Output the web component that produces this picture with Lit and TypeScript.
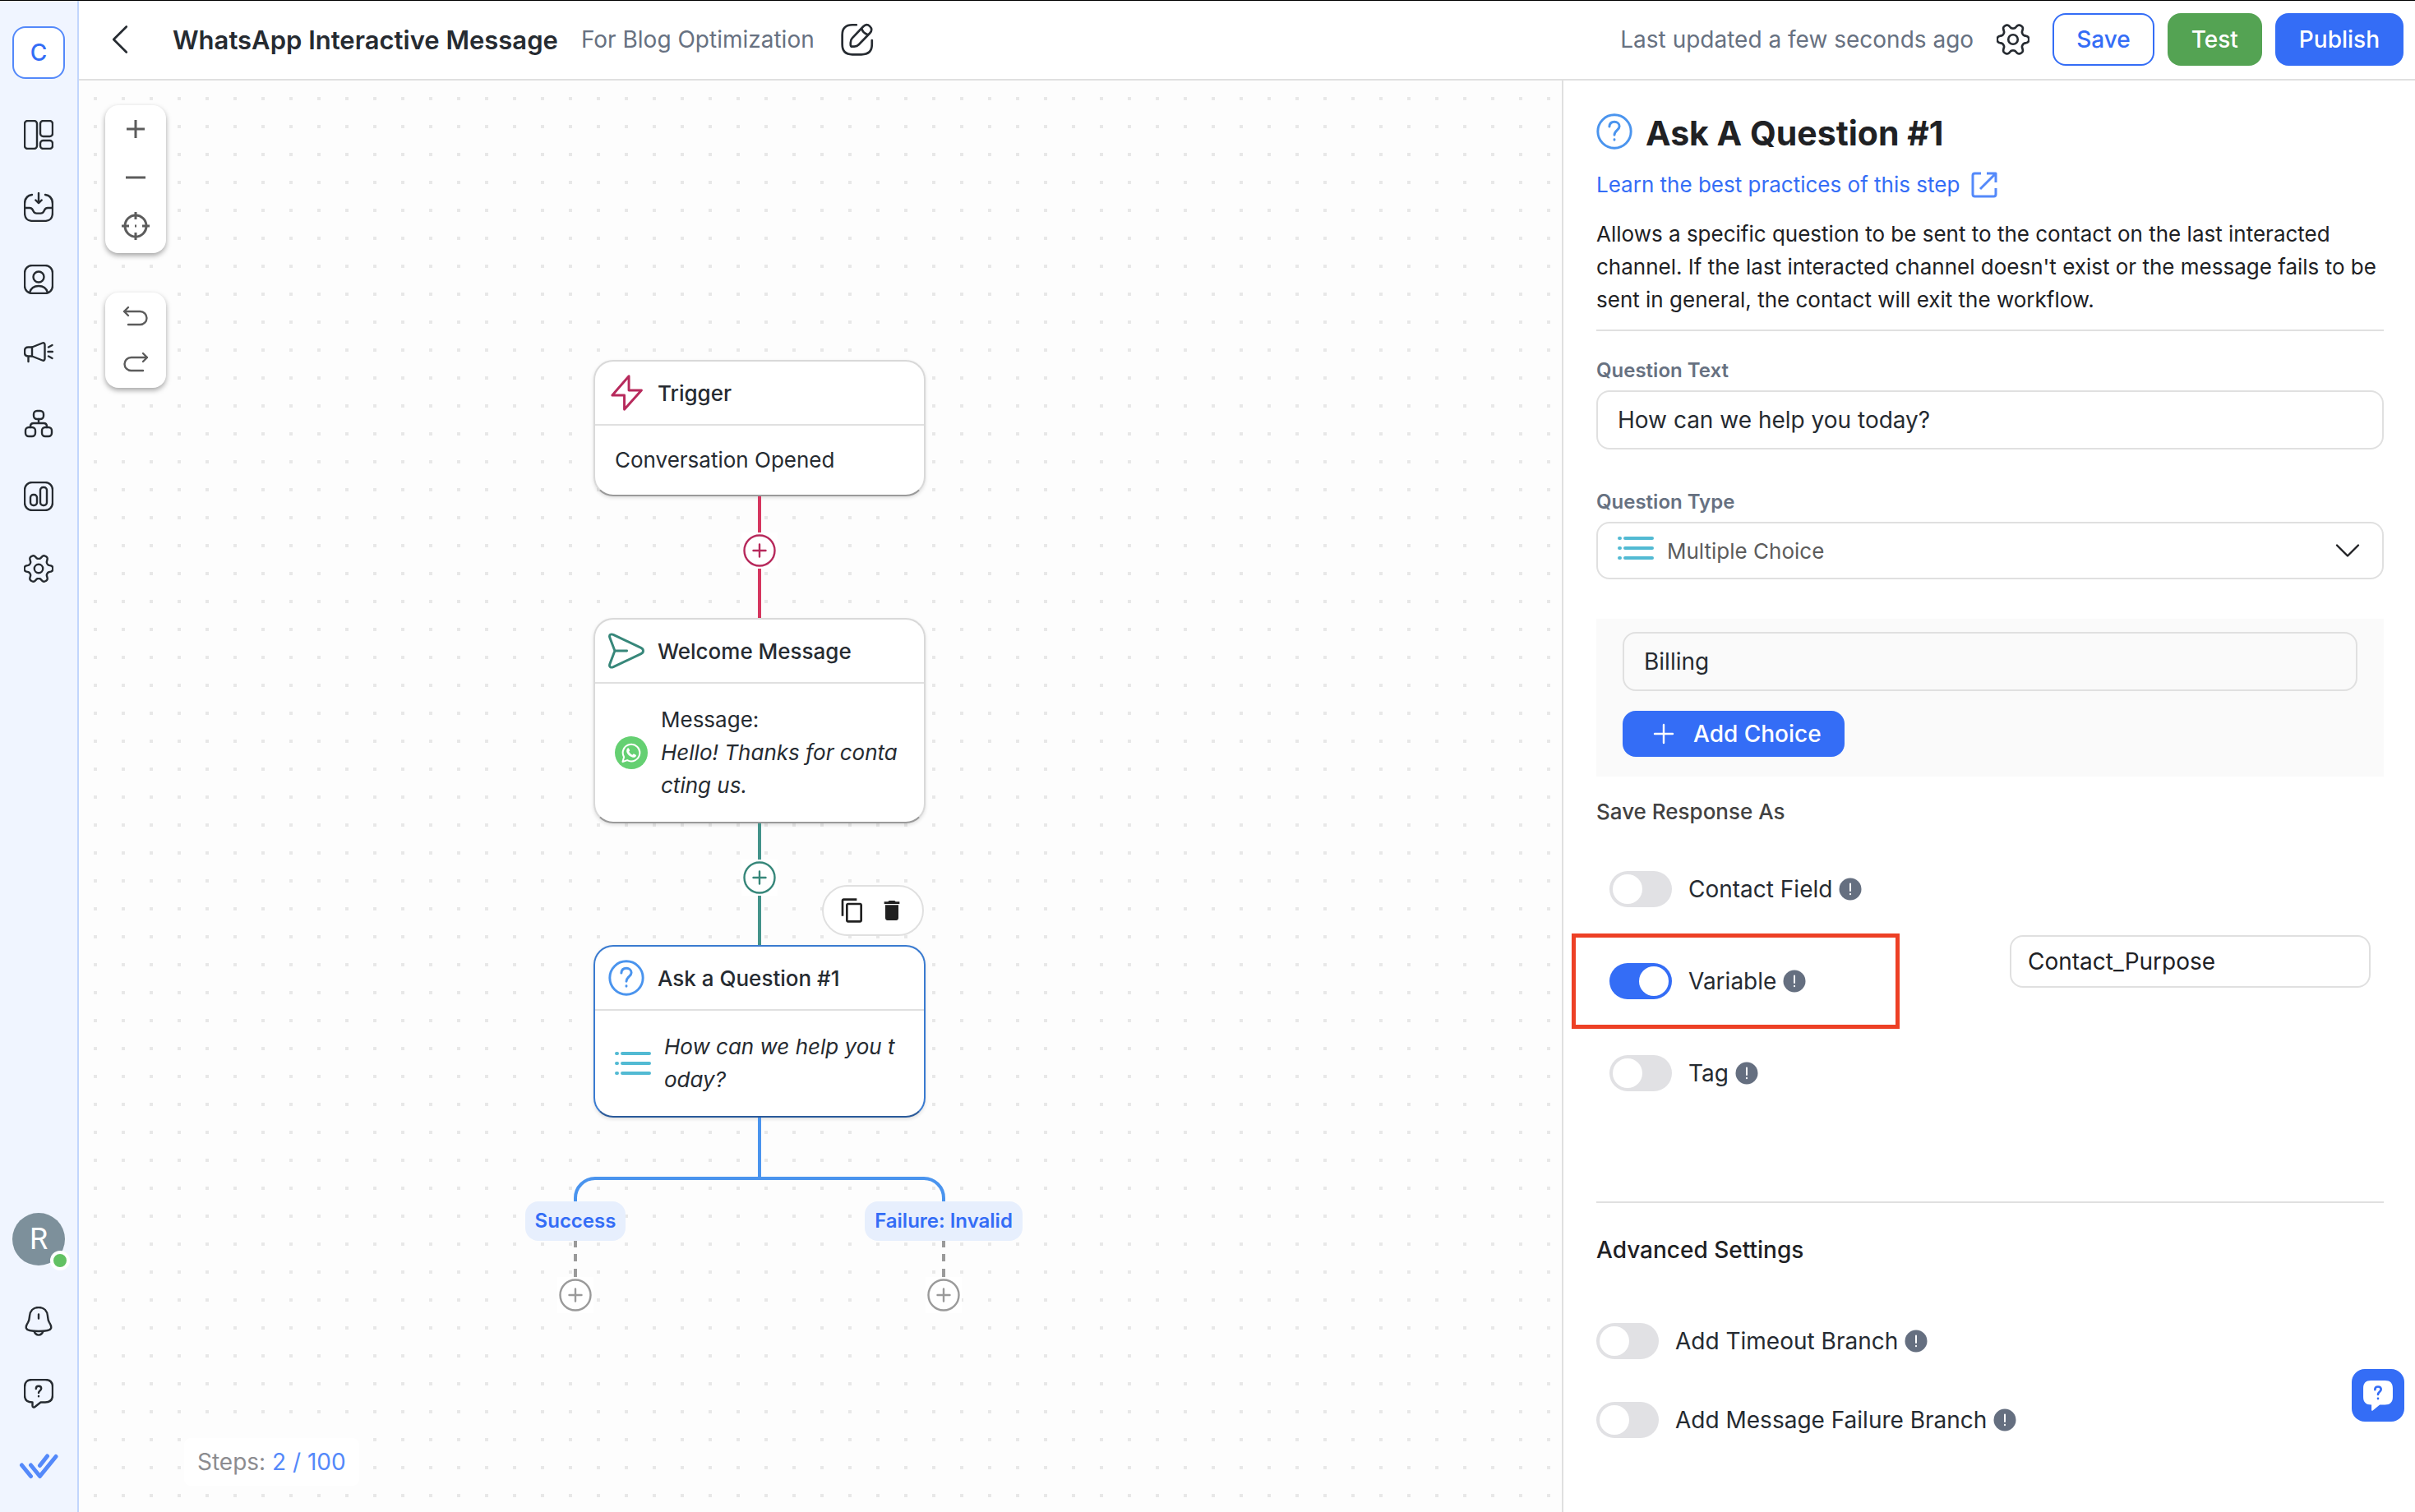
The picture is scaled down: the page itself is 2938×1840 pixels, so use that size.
import { LitElement, html, css, svg, nothing, type TemplateResult, type SVGTemplateResult } from "lit";
import { customElement, property } from "lit/decorators.js";
import { classMap } from "lit/directives/class-map.js";

/* Outline of a six-lobed cog around (18, 18), with rounded square lobes. */
const cogOutline = (() => {
  const points: string[] = [];
  for (let i = 0; i < 180; i++) {
    const angle = (i * Math.PI) / 90;
    const radius = 14.7 + 2.6 * (Math.tanh(1.6 * Math.cos(6 * angle)) / Math.tanh(1.6));
    points.push(`${(18 + radius * Math.cos(angle)).toFixed(2)} ${(18 + radius * Math.sin(angle)).toFixed(2)}`);
  }
  return `M${points.join("L")}z`;
})();

/* Icon shapes, drawn on a 36-unit grid with the current text colour. */
const ICONS: Record<string, SVGTemplateResult> = {
  dashboard: svg`<rect x="1" y="1" width="15" height="34" rx="3.500"/><rect x="20" y="1" width="15" height="19" rx="3.500"/><rect x="20" y="25" width="15" height="10" rx="3.500"/>`,
  inbox: svg`<path d="M10 3C4 4 1 7 1 14v10c0 8 3 11 11 11h12c8 0 11-3 11-11V14c0-7-3-10-9-11"/><path d="M1 19h6c2 0 3 .8 3.800 2.400l.8 1.600c.8 1.600 2 2.600 4 2.600h4.800c2 0 3.200-1 4-2.600l.8-1.600C26 19.800 27 19 29 19h6"/><path d="M18 1v12M14.300 9.500 18 13.200l3.700-3.700"/>`,
  contact: svg`<rect x="1" y="1" width="34" height="34" rx="9"/><circle cx="18" cy="15" r="6.500"/><path d="M7 34c1.500-5 5.800-8 11-8s9.500 3 11 8"/>`,
  broadcast: svg`<path d="M10 12.500 22.500 7.500c1.600-.6 3 .2 3 2v17c0 1.800-1.400 2.600-3 2L10 23.500z"/><path d="M10 12.500H5.500c-3 0-4.500 1.500-4.500 4.500v2c0 3 1.500 4.500 4.500 4.500H10M5.500 24v6"/><path d="M29.500 18H35M30 12.500l4.500-2.500M30 23.500l4.500 2.500"/>`,
  workflow: svg`<rect x="12" y="2" width="12" height="10" rx="4"/><rect x="2" y="22" width="12" height="11" rx="4"/><rect x="22" y="22" width="12" height="11" rx="4"/><path d="M18 12v5M8 22v-1c0-3 1-4 4-4h12c3 0 4 1 4 4v1"/>`,
  reports: svg`<rect x="1" y="1" width="34" height="34" rx="9"/><rect x="8" y="16" width="8" height="13" rx="3.500"/><rect x="20" y="7" width="8" height="22" rx="3.500"/>`,
  gear: svg`<path d=${cogOutline}/><circle cx="18" cy="18" r="5.200"/>`,
  bell: svg`<path d="M18 1C11 1 7.500 6 7 11.500c-.3 4-.3 5-2 8C3.500 22 2 24 3 26.500c.8 2.200 4 3.500 15 3.500s14.200-1.300 15-3.500c1-2.500-.5-4.500-2-7-1.700-3-1.700-4-2-8C28.500 6 25 1 18 1z"/><path d="M12.500 30c1.200 3.200 3 4.600 5.500 4.600s4.300-1.400 5.500-4.600M18 9.500v5"/>`,
  help: svg`<path d="M10 1h16c6 0 9 3 9 9v10c0 6-3 8.500-9 8.500h-5.500L13.500 34c-1.500 1.200-3 .6-3-1.300v-4.200C4 28.500 1 26 1 20V10c0-6 3-9 9-9z"/><path d="M14.800 12c0-2 1.300-3.200 3.200-3.200s3.200 1.200 3.200 3c0 2.400-3.200 2.700-3.200 5.200M18 21v.3"/>`,
  edit: svg`<path d="M17 2h-4.500C5 2 1.500 5.500 1.500 13v10.500C1.500 31 5 34.500 12.500 34.500h10c8 0 11.500-3.500 11.500-11V19"/><path d="M10.600 21.500c0-2.200.3-3.500 1.800-5L24.500 3.800c2.300-2.300 5-2.300 7.300-.1s2.200 5.100 0 7.300L19.600 23.600c-1.500 1.500-2.800 2-5 2.100l-2 .1c-1.400.1-2-.6-2-1.900zM22.600 5.800c1 3.700 3.300 6 7 7"/>`,
  back: svg`<path d="M25 4 11 18l14 14"/>`,
  plus: svg`<path d="M18 7v22M7 18h22"/>`,
  minus: svg`<path d="M6 18h24"/>`,
  target: svg`<circle cx="18" cy="18" r="13"/><path d="M18 1v9M18 26v9M1 18h9M26 18h9M17 18h2"/>`,
  undo: svg`<path d="M9 29h14.500a8 8 0 0 0 0-16H4M9 8l-5 5 5 5"/>`,
  redo: svg`<path d="M27 29H12.500a8 8 0 0 1 0-16H32M27 8l5 5-5 5"/>`,
  question: svg`<circle cx="18" cy="18" r="16.500"/><path d="M13 13.200c.2-3 2.200-4.800 5-4.800s5 1.800 5 4.500c0 3.600-5 4-5 8.600M18 26v.4"/>`,
  external: svg`<path d="M14 4H6.500C5 4 4 5 4 6.500v23C4 31 5 32 6.500 32h23c1.500 0 2.500-1 2.500-2.500V22M21 4h11v11M31.500 4.500 13 23"/>`,
  chevron: svg`<path d="m5 11.500 13 13 13-13"/>`,
  bolt: svg`<path d="M20.500 1.500 4 20.500h12V34.500l17-19H20.500z"/>`,
  send: svg`<path d="M1.500 4.800C.6 2.200 2.400.9 5 1.900L32.600 15c2.900 1.400 2.900 4.600 0 6L5 34.100c-2.600 1-4.400-.3-3.500-2.900L6.500 18zM6.500 18h12"/>`,
};

const shape = (name: string) => html`<svg class="icon" viewBox="0 0 36 36" aria-hidden="true">${ICONS[name]}</svg>`;

const listIcon = html`<svg class="list-icon" viewBox="0 0 44 28" aria-hidden="true">
  <path d="M2 2h1M9 2h33M2 14h1M9 14h33M2 26h1M9 26h33" />
</svg>`;

const copyIcon = html`<svg class="solid" viewBox="0 0 24 24" aria-hidden="true">
  <path d="M16 1H4c-1.100 0-2 .9-2 2v14h2V3h12V1zm3 4H8c-1.100 0-2 .9-2 2v14c0 1.100.9 2 2 2h11c1.100 0 2-.9 2-2V7c0-1.100-.9-2-2-2zm0 16H8V7h11v14z" />
</svg>`;

const trashIcon = html`<svg class="solid" viewBox="0 0 24 24" aria-hidden="true">
  <path d="M6 19c0 1.100.9 2 2 2h8c1.100 0 2-.9 2-2V7H6v12zM19 4h-3.500l-1-1h-5l-1 1H5v2h14V4z" />
</svg>`;

const whatsappIcon = html`<svg class="whatsapp" viewBox="0 0 40 40" aria-hidden="true">
  <circle cx="20" cy="20" r="20" fill="#65d072" />
  <path d="m9.500 31 1.600-5.800a10.300 10.300 0 1 1 4 3.900z" fill="none" stroke="#fff" stroke-width="2" stroke-linejoin="round" />
  <path d="M15.200 14.800c.7-.8 1.600-.7 2 .1l.9 2c.3.700-.6 1.400-.9 1.900.9 1.900 2.300 3.100 4.200 3.900.6-.5 1.200-1.600 1.900-1.300l2 1c.8.4.8 1.100.4 1.800-.9 1.600-2.800 1.900-4.600 1.300-3-1-5.600-3.300-6.600-6.100-.6-1.700-.3-3.500.7-4.600z" fill="#fff" />
</svg>`;

const baseStyles = css`
  :host {
    box-sizing: border-box;
    color: #262b31;
    font-family: Inter, "Liberation Sans", sans-serif;
    font-size: 28px;
  }
  *, *::before, *::after { box-sizing: border-box; }
  button, input, select { font: inherit; color: inherit; margin: 0; }
  button { padding: 0; border: 0; background: none; cursor: pointer; }
  a { text-decoration: none; }
  .icon {
    display: block;
    flex: none;
    width: 36px;
    height: 36px;
    fill: none;
    stroke: currentColor;
    stroke-width: 2.4;
    stroke-linecap: round;
    stroke-linejoin: round;
  }
  .list-icon {
    flex: none;
    width: 44px;
    height: 28px;
    fill: none;
    stroke: #52bad3;
    stroke-width: 4;
    stroke-linecap: round;
  }
`;

@customElement("side-nav")
export class SideNav extends LitElement {
  static styles = [baseStyles, css`
    :host {
      display: flex;
      flex-direction: column;
      align-items: center;
      padding: 31px 0 12px;
      background: #f0f5ff;
      border-right: 2px solid #c2d6fc;
    }
    .space {
      display: grid;
      place-items: center;
      width: 64px;
      height: 64px;
      margin-bottom: 24px;
      border: 2px solid #5489fa;
      border-radius: 16px;
      background: #fff;
      color: #346df6;
      font-weight: 500;
    }
    nav { display: flex; flex-direction: column; }
    .item { display: grid; place-items: center; width: 94px; height: 88px; color: #262b31; }
    .end { margin-top: auto; }
    .avatar {
      position: relative;
      display: grid;
      place-items: center;
      width: 64px;
      height: 64px;
      margin: 0 auto 24px;
      border-radius: 50%;
      background: #7d909b;
      color: #fff;
      font-family: Roboto, sans-serif;
      font-size: 36px;
    }
    .status {
      position: absolute;
      right: -6px;
      bottom: -6px;
      width: 24px;
      height: 24px;
      border: 4px solid #fff;
      border-radius: 50%;
      background: #62c163;
    }
    .brand { width: 48px; height: 32px; fill: none; stroke: #5489fa; stroke-width: 5; stroke-linecap: round; stroke-linejoin: round; }
  `];

  private item(name: string, label: string) {
    return html`<a class="item" href="#${name}" aria-label=${label}>${shape(name)}</a>`;
  }

  render() {
    return html`
      <button class="space" aria-label="Workspace C">C</button>
      <nav aria-label="Main">
        ${this.item("dashboard", "Dashboard")}
        ${this.item("inbox", "Inbox")}
        ${this.item("contact", "Contacts")}
        ${this.item("broadcast", "Broadcasts")}
        ${this.item("workflow", "Workflows")}
        ${this.item("reports", "Reports")}
        ${this.item("gear", "Settings")}
      </nav>
      <nav class="end" aria-label="Account">
        <button class="avatar" aria-label="Profile">R<span class="status"></span></button>
        ${this.item("bell", "Notifications")}
        ${this.item("help", "Help")}
        <a class="item" href="#home" aria-label="Home">
          <svg class="brand" viewBox="0 0 48 32" aria-hidden="true">
            <path d="m3.500 15 11 13.500M14.500 15l11 13.500L45 4.500M25.500 15.500l9-11.500" />
          </svg>
        </a>
      </nav>
    `;
  }
}

@customElement("top-bar")
export class TopBar extends LitElement {
  static styles = [baseStyles, css`
    :host {
      display: flex;
      align-items: center;
      gap: 28px;
      height: 97px;
      padding: 0 14px 1px 30px;
      background: #fff;
      border-bottom: 2px solid #e0e0e0;
    }
    .icon { width: 40px; height: 40px; }
    .heading { display: flex; align-items: center; gap: 28px; margin: 0 auto 0 16px; }
    h1 { margin: 0; font-size: 31px; font-weight: 600; }
    .muted { color: #677181; }
    .edit { margin-left: 4px; }
    .actions { display: flex; gap: 16px; }
    .btn { height: 64px; padding: 0 29px; border-radius: 16px; font-weight: 500; color: #fff; }
    .save { border: 2px solid #346df6; padding: 0 27px; color: #346df6; background: #fff; }
    .test { background: #54a353; }
    .publish { background: #346df6; }
  `];

  render() {
    return html`
      <button aria-label="Back">${shape("back")}</button>
      <div class="heading">
        <h1>WhatsApp Interactive Message</h1>
        <span class="muted">For Blog Optimization</span>
        <button class="edit" aria-label="Edit name">${shape("edit")}</button>
      </div>
      <span class="muted">Last updated a few seconds ago</span>
      <button aria-label="Workflow settings">${shape("gear")}</button>
      <div class="actions">
        <button class="btn save">Save</button>
        <button class="btn test">Test</button>
        <button class="btn publish">Publish</button>
      </div>
    `;
  }
}

@customElement("flow-canvas")
export class FlowCanvas extends LitElement {
  static styles = [baseStyles, css`
    :host {
      position: relative;
      display: block;
      overflow: hidden;
      background-color: #fdfdfd;
      background-image: conic-gradient(from 90deg at 30px 30px, #e8e8e8 90deg, transparent 0);
      background-size: 34px 34px;
      background-position: -12px -10px;
    }
    .tools { position: absolute; left: 32px; top: 30px; display: grid; gap: 48px; }
    .tool-group {
      display: grid;
      justify-items: center;
      align-content: space-around;
      width: 74px;
      padding-bottom: 4px;
      border-radius: 16px;
      background: #fff;
      color: #5c5c5c;
      box-shadow: 0 3px 6px rgba(0, 0, 0, 0.35);
    }
    .zoom { height: 180px; }
    .history { height: 116px; }
    .zoom .icon { stroke-width: 3; stroke-linecap: butt; }
    .flow { position: absolute; left: 541px; top: 340px; width: 574px; display: flex; flex-direction: column; align-items: center; }
    .node {
      width: 404px;
      border: 2px solid #d9d9d9;
      border-bottom-color: #9a9a9a;
      border-radius: 24px;
      background: #fff;
      box-shadow: 0 2px 4px rgba(0, 0, 0, 0.12);
    }
    .node.selected { border-color: #3a7bd0; border-bottom-color: #2a5a9a; }
    .node-head {
      display: flex;
      align-items: center;
      gap: 16px;
      height: 78px;
      padding: 0 16px;
      border-bottom: 2px solid #e0e0e0;
    }
    h2 { margin: 0; font-size: 26px; font-weight: 500; }
    .node-icon { display: flex; }
    .node-icon .icon { width: 44px; height: 44px; }
    .node-body {
      display: flex;
      align-items: center;
      gap: 16px;
      padding: 24px;
      font-size: 26px;
      line-height: 40px;
      word-break: break-all;
    }
    .short { padding: 22px 24px; }
    .red { color: #b72a5c; }
    .green { color: #37877a; }
    .blue { color: #4a94ee; }
    .grey { color: #9a9a9a; }
    .whatsapp { flex: none; width: 40px; height: 40px; }
    .link { display: flex; flex-direction: column; align-items: center; height: 148px; }
    .stem { width: 4px; height: 44px; background: #d6365f; }
    .stem.long { height: 60px; }
    .stem.teal { background: #43938a; }
    .add { display: grid; place-items: center; width: 44px; height: 44px; background: #fff; }
    .add svg { width: 40px; height: 40px; fill: none; stroke: currentColor; stroke-width: 2.4; stroke-linecap: round; }
    .fork { display: block; width: 452px; height: 102px; fill: none; stroke: #4a94ee; stroke-width: 4; }
    .branches { display: flex; justify-content: space-between; width: 574px; }
    .branch { display: flex; flex-direction: column; align-items: center; width: 126px; white-space: nowrap; }
    .tag { padding: 0 12px; border-radius: 16px; background: #e7effd; color: #346df6; font-size: 24px; font-weight: 600; line-height: 48px; }
    .dash { width: 4px; height: 44px; stroke: #9a9a9a; stroke-width: 4; }
    .node-actions {
      position: absolute;
      left: 363px;
      top: 639px;
      display: flex;
      align-items: center;
      justify-content: center;
      gap: 16px;
      width: 124px;
      height: 62px;
      padding-right: 2px;
      border: 2px solid #e0e0e0;
      border-radius: 31px;
      background: #fff;
    }
    .solid { display: block; width: 32px; height: 32px; fill: #202020; }
    .steps {
      position: absolute;
      left: 128px;
      bottom: 32px;
      padding: 0 16px;
      border-radius: 8px;
      background: #fff;
      color: #8c8c90;
      line-height: 58px;
    }
    .steps strong { color: #5489fa; font-weight: 400; }
  `];

  private addButton(tone: string) {
    return html`<button class="add ${tone}" aria-label="Add step">
      <svg viewBox="0 0 40 40" aria-hidden="true"><circle cx="20" cy="20" r="18.500" /><path d="M12.500 20h15M20 12.500v15" /></svg>
    </button>`;
  }

  private node(icon: string, tone: string, title: string, body: TemplateResult, extra: Record<string, boolean> = {}) {
    return html`<article class=${classMap({ node: true, selected: !!extra.selected })}>
      <header class="node-head"><span class="node-icon ${tone}">${shape(icon)}</span><h2>${title}</h2></header>
      <div class=${classMap({ "node-body": true, short: !!extra.short })}>${body}</div>
    </article>`;
  }

  private branch(label: string) {
    return html`<div class="branch">
      <span class="tag">${label}</span>
      <svg class="dash" viewBox="0 0 4 44" aria-hidden="true"><path d="M2 0v8M2 16v9M2 34v10" /></svg>
      ${this.addButton("grey")}
    </div>`;
  }

  render() {
    return html`
      <div class="flow">
        ${this.node("bolt", "red", "Trigger", html`<span>Conversation Opened</span>`, { short: true })}
        <div class="link"><span class="stem"></span>${this.addButton("red")}<span class="stem long"></span></div>
        ${this.node("send", "green", "Welcome Message", html`${whatsappIcon}<span>Message:<br /><em>Hello! Thanks for contacting us.</em></span>`)}
        <div class="link"><span class="stem teal"></span>${this.addButton("green")}<span class="stem long teal"></span></div>
        ${this.node("question", "blue", "Ask a Question #1", html`${listIcon}<em>How can we help you today?</em>`, { selected: true })}
        <svg class="fork" viewBox="0 0 452 102" aria-hidden="true">
          <path d="M226 0v74M2 102v-4a24 24 0 0 1 24-24h400a24 24 0 0 1 24 24v4" />
        </svg>
        <div class="branches">${this.branch("Success")}${this.branch("Failure: Invalid")}</div>
        <div class="node-actions">
          <button aria-label="Duplicate step">${copyIcon}</button>
          <button aria-label="Delete step">${trashIcon}</button>
        </div>
      </div>
      <div class="tools">
        <div class="tool-group zoom">
          <button aria-label="Zoom in">${shape("plus")}</button>
          <button aria-label="Zoom out">${shape("minus")}</button>
          <button aria-label="Centre view">${shape("target")}</button>
        </div>
        <div class="tool-group history">
          <button aria-label="Undo">${shape("undo")}</button>
          <button aria-label="Redo">${shape("redo")}</button>
        </div>
      </div>
      <div class="steps">Steps: <strong>2 / 100</strong></div>
    `;
  }
}

@customElement("toggle-row")
export class ToggleRow extends LitElement {
  @property() label = "";
  @property({ type: Boolean }) on = false;

  static styles = [baseStyles, css`
    :host { display: flex; align-items: center; gap: 8px; }
    label { display: flex; align-items: center; gap: 20px; cursor: pointer; }
    .switch {
      appearance: none;
      flex: none;
      width: 76px;
      height: 44px;
      padding: 4px;
      border-radius: 22px;
      background: #e1e1e4;
      cursor: pointer;
    }
    .switch::before { content: ""; display: block; width: 36px; height: 36px; border-radius: 50%; background: #fff; }
    .switch:checked { background: #346df6; }
    .switch:checked::before { margin-left: auto; }
    .info { width: 28px; height: 28px; fill: #656f80; }
  `];

  render() {
    return html`
      <label><input class="switch" type="checkbox" role="switch" .checked=${this.on} />${this.label}</label>
      <svg class="info" viewBox="0 0 28 28" aria-hidden="true">
        <circle cx="14" cy="14" r="13.500" />
        <path d="M14 7.500v8.500M14 19.800v.4" stroke="#fff" stroke-width="2" stroke-linecap="round" />
      </svg>
    `;
  }
}

@customElement("step-panel")
export class StepPanel extends LitElement {
  static styles = [baseStyles, css`
    :host {
      display: block;
      padding: 40px 38px 48px 40px;
      background: #fff;
      border-left: 2px solid #e0e0e0;
    }
    .title { display: flex; align-items: flex-start; gap: 16px; color: #4a94ee; }
    .title .icon { width: 44px; height: 44px; }
    h2 { margin: 0; color: #202124; font-size: 41px; font-weight: 700; line-height: 48px; }
    .learn { display: flex; align-items: center; gap: 12px; margin-top: 19px; color: #346df6; font-size: 26px; line-height: 40px; }
    .learn .icon { stroke-width: 3; stroke: #5489fa; stroke-linecap: butt; }
    .about { margin: 20px 0 16px; color: #202124; font-size: 26px; line-height: 40px; }
    hr { height: 2px; margin: 0; border: 0; background: #e0e0e0; }
    .field { display: grid; gap: 8px; margin-top: 32px; }
    .field + .field { margin-top: 48px; }
    .field label { color: #677181; font-size: 24px; font-weight: 600; line-height: 32px; }
    .box { width: 100%; height: 72px; padding: 0 24px; border: 2px solid #e0e0e0; border-radius: 16px; background: transparent; outline: 0; }
    .picker { position: relative; }
    .picker select { appearance: none; height: 70px; padding-left: 84px; color: #5c5c5c; font-size: 26px; }
    .picker .list-icon { position: absolute; left: 26px; top: 18px; }
    .picker .icon { position: absolute; right: 26px; top: 17px; color: #202124; }
    .choices { margin-top: 48px; padding: 16px 32px 24px; background: #fafafa; }
    .add-choice {
      display: flex;
      align-items: center;
      gap: 18px;
      height: 56px;
      margin-top: 24px;
      padding: 0 28px 0 32px;
      border-radius: 16px;
      background: #346df6;
      color: #fff;
      font-weight: 500;
    }
    h3 { margin: 0; font-size: 28px; font-weight: 500; line-height: 40px; color: #202124; }
    h3.minor { margin-top: 23px; font-size: 26px; color: #424242; }
    .responses { display: grid; margin-top: 18px; padding: 0 16px; }
    .response { position: relative; display: grid; grid-template-columns: 487fr 439fr; align-items: center; min-height: 112px; }
    .response .box { align-self: start; height: 64px; padding: 0 20px; color: #202124; }
    .highlight { position: absolute; left: -46px; top: -2px; width: 399px; height: 116px; border: 5px solid #ed4025; pointer-events: none; }
    .advanced { margin-top: 100px; }
    .advanced h3 { margin: 37px 0 43px; }
    .advanced toggle-row { min-height: 96px; }
  `];

  render() {
    return html`
      <div class="title">${shape("question")}<h2>Ask A Question #1</h2></div>
      <a class="learn" href="#docs">Learn the best practices of this step ${shape("external")}</a>
      <p class="about">
        Allows a specific question to be sent to the contact on the last interacted channel. If the last interacted
        channel doesn't exist or the message fails to be sent in general, the contact will exit the workflow.
      </p>
      <hr />
      <div class="field">
        <label for="question">Question Text</label>
        <input class="box" id="question" type="text" .value=${"How can we help you today?"} />
      </div>
      <div class="field">
        <label for="type">Question Type</label>
        <div class="picker">
          <select class="box" id="type"><option>Multiple Choice</option></select>
          ${listIcon}${shape("chevron")}
        </div>
      </div>
      <div class="choices">
        <input class="box" type="text" aria-label="Choice 1" .value=${"Billing"} />
        <button class="add-choice">${shape("plus")}Add Choice</button>
      </div>
      <h3 class="minor">Save Response As</h3>
      <div class="responses">
        ${["Contact Field", "Variable", "Tag"].map((name) => {
          const active = name === "Variable";
          return html`<div class="response">
            <toggle-row .label=${name} .on=${active}></toggle-row>
            ${active
              ? html`<input class="box" type="text" aria-label="Variable name" .value=${"Contact_Purpose"} /><div class="highlight"></div>`
              : nothing}
          </div>`;
        })}
      </div>
      <section class="advanced">
        <hr />
        <h3>Advanced Settings</h3>
        <toggle-row .label=${"Add Timeout Branch"}></toggle-row>
        <toggle-row .label=${"Add Message Failure Branch"}></toggle-row>
      </section>
    `;
  }
}

@customElement("app-root")
export class AppRoot extends LitElement {
  static styles = [baseStyles, css`
    :host {
      display: grid;
      grid-template-columns: 96px minmax(0, 1fr);
      min-height: 100vh;
      border-top: 1px solid #000;
    }
    .main { display: grid; grid-template-rows: auto 1fr; }
    .work { display: grid; grid-template-columns: 1804fr 1038fr; }
    .chat {
      position: fixed;
      right: 13px;
      bottom: 110px;
      display: grid;
      place-items: center;
      width: 64px;
      height: 64px;
      border-radius: 16px;
      background: #346df6;
    }
    .chat svg { width: 38px; height: 38px; }
  `];

  render() {
    return html`
      <side-nav></side-nav>
      <div class="main">
        <top-bar></top-bar>
        <main class="work"><flow-canvas></flow-canvas><step-panel></step-panel></main>
      </div>
      <button class="chat" aria-label="Open support chat">
        <svg viewBox="0 0 36 36" fill="none" stroke-linecap="round" stroke-linejoin="round" aria-hidden="true">
          <path d="M10 1h16c6 0 9 3 9 9v10c0 6-3 9-9 9h-6l-8 6.500c-1 .6-1.500.2-1.500-1V29C4 29 1 26 1 20V10c0-6 3-9 9-9z" fill="#fff" />
          <path d="M14.500 11.500c0-2.200 1.500-3.500 3.500-3.500s3.500 1.300 3.500 3.200c0 2.600-3.500 3-3.500 5.800M18 21.500v.4" stroke="#346df6" stroke-width="2.500" />
        </svg>
      </button>
    `;
  }
}
